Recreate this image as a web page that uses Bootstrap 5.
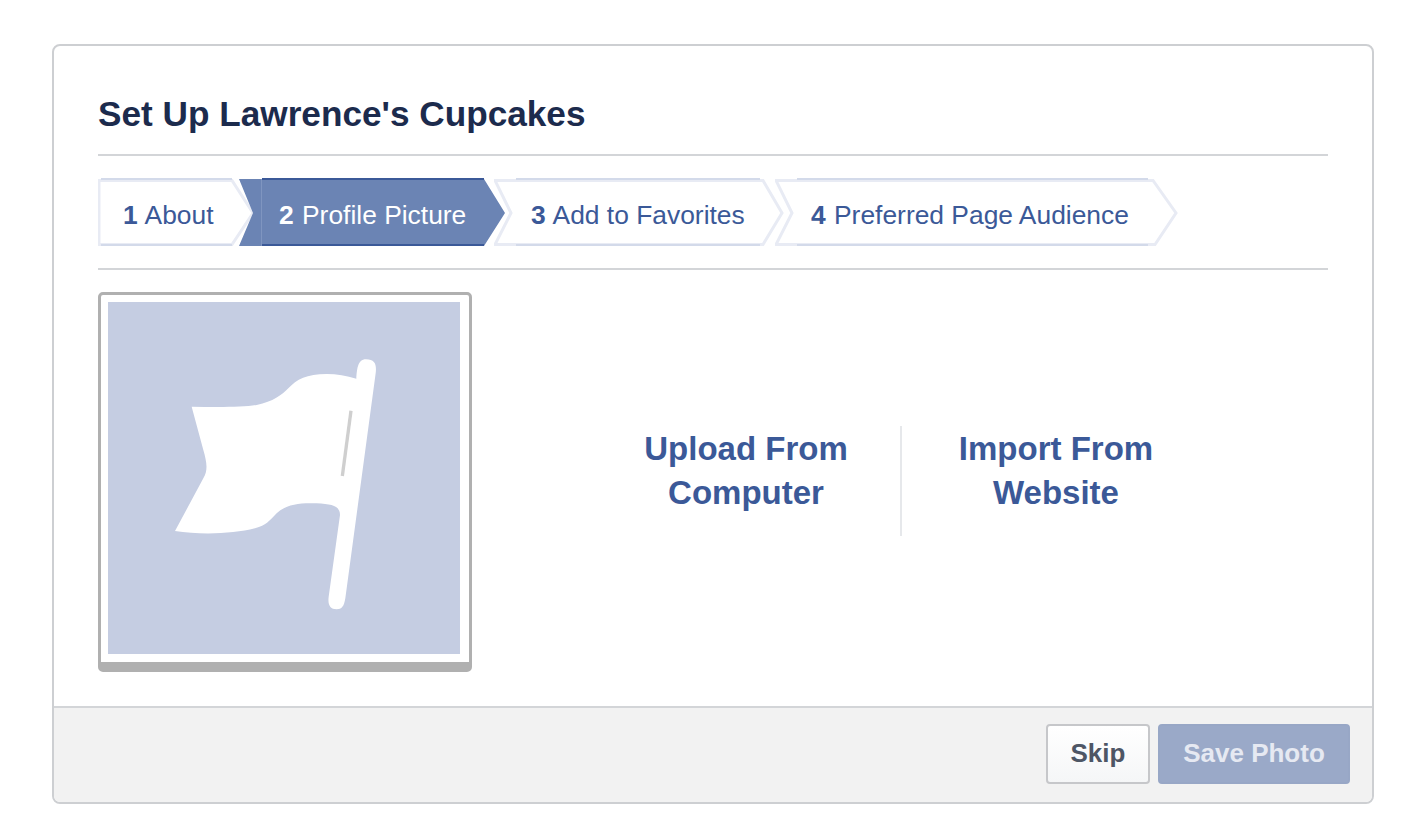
<!DOCTYPE html>
<html lang="en">
<head>
<meta charset="utf-8">
<title>Set Up Lawrence's Cupcakes</title>
<link href="https://cdn.jsdelivr.net/npm/bootstrap@5.3.0/dist/css/bootstrap.min.css" rel="stylesheet">
<style>
html,body{background:#fff;font-family:"Liberation Sans",Arial,sans-serif;overflow:hidden}
.setup-shell{width:1322px;height:760px;margin:44px 0 0 52px;border:2px solid #cdcfd2;border-radius:8px;background:#fff;overflow:hidden}
.setup-body{padding:43px 44px 0 44px;height:660px}
.setup-title{font-size:35.2px;font-weight:700;line-height:50px;color:#1c2b4d;margin:0;padding-bottom:15px;border-bottom:2px solid #d3d5d8}
.step-strip{height:114px;padding:22px 0 0 0;border-bottom:2px solid #d3d5d8;margin:0;list-style:none}
.step-item{position:relative;height:68px;line-height:74px;font-size:26.4px;color:#3b5998;white-space:nowrap}
.step-item b{font-weight:700;margin-right:1px}
.step-shape{position:absolute;left:0;top:0}
.step-text{position:relative}
.step-on{color:#fff}
.pic-frame{width:374px;height:380px;margin-top:22px;border:3px solid #b0b0b0;border-bottom-width:10px;border-radius:5px;padding:7px;background:#fff;flex:none}
.pic-box{width:352px;height:352px;background:#c5cde2;display:block}
.pick-row{margin-left:118px;height:110px;margin-top:156px}
.pick-link{display:block;width:310px;text-align:center;font-size:33px;font-weight:700;line-height:44px;color:#3b5998;text-decoration:none;padding-top:1px}
.pick-first{padding-left:2px}
.pick-sep{border-left:2px solid #e6e8eb}
.setup-foot{height:96px;background:#f2f2f2;border-top:2px solid #d3d5d8;padding:16px 22px 0 0}
.foot-btn{height:60px;font-size:26px;font-weight:700;line-height:1;border-radius:4px;padding:0 0 2px 0}
.foot-skip{width:104px;color:#4e5665;background:linear-gradient(#fff,#f5f6f7);border:2px solid #c6c7ca}
.foot-save{width:192px;margin-left:8px;color:#e6e9f2;background:#9aa9c8;border:2px solid #98a7c6}
</style>
</head>
<body>
<div class="setup-shell d-flex flex-column">
  <div class="setup-body">
    <h1 class="setup-title">Set Up Lawrence's Cupcakes</h1>
    <ul class="step-strip d-flex">
      <li class="step-item" style="width:140px;padding-left:25px">
        <svg class="step-shape" width="160" height="68" viewBox="0 0 160 68"><path d="M1 2.5H134L155 35L134 66.5H1Z" fill="#fff" stroke="#e8ebf4" stroke-width="3"/><path d="M3 1H134M3 67H134" stroke="#d3daea" stroke-width="2"/></svg>
        <span class="step-text"><b>1</b> About</span>
      </li>
      <li class="step-item step-on" style="width:256px;padding-left:41px">
        <svg class="step-shape" width="270" height="68" viewBox="0 0 270 68"><path d="M1 1H246L267 35L246 68H1L15 35Z" fill="#6b84b4"/><path d="M24 1H246M24 67H246" stroke="#3b5998" stroke-width="2"/><path d="M23.5 1V68" stroke="#7f95c0"/></svg>
        <span class="step-text"><b>2</b> Profile Picture</span>
      </li>
      <li class="step-item" style="width:281px;padding-left:37px">
        <svg class="step-shape" width="300" height="68" viewBox="0 0 300 68"><path d="M1 2.5H269L288 35L269 66.5H1L17 35Z" fill="#fff" stroke="#e8ebf4" stroke-width="3"/><path d="M22 1H266M22 67H266" stroke="#d3daea" stroke-width="2"/></svg>
        <span class="step-text"><b>3</b> Add to Favorites</span>
      </li>
      <li class="step-item" style="width:403px;padding-left:36px">
        <svg class="step-shape" width="405" height="68" viewBox="0 0 405 68"><path d="M1 2.5H378L401 35L380 66.5H1L17 35Z" fill="#fff" stroke="#e8ebf4" stroke-width="3"/><path d="M22 1H373M22 67H373" stroke="#d3daea" stroke-width="2"/></svg>
        <span class="step-text"><b>4</b> Preferred Page Audience</span>
      </li>
    </ul>
    <div class="d-flex">
      <div class="pic-frame">
        <svg class="pic-box" viewBox="0 0 1056 1056"><g transform="translate(156 144)">
          <path d="M95 170C170 172 250 172 290 165C340 155 365 135 385 115C410 88 440 72 500 72C530 72 560 78 589 86C591 60 592 28 618 28C646 28 650 45 647 70L556 745C552 770 545 778 530 778C510 778 503 765 506 740L540 495C540 470 520 462 470 460C420 458 380 462 350 490C325 515 320 525 285 535C220 552 120 555 45 543L130 385C145 360 140 335 130 300Z" fill="#fff"/>
          <path d="M573 182L547 378" stroke="#cfcfcf" stroke-width="10" fill="none"/>
        </g></svg>
      </div>
      <div class="pick-row d-flex">
        <a class="pick-link pick-first" href="#">Upload From<br>Computer</a>
        <a class="pick-link pick-sep" href="#">Import From<br>Website</a>
      </div>
    </div>
  </div>
  <div class="setup-foot d-flex justify-content-end align-items-start">
    <button type="button" class="btn foot-btn foot-skip">Skip</button>
    <button type="button" class="btn foot-btn foot-save">Save Photo</button>
  </div>
</div>
<script src="https://cdn.jsdelivr.net/npm/bootstrap@5.3.0/dist/js/bootstrap.bundle.min.js"></script>
</body>
</html>
